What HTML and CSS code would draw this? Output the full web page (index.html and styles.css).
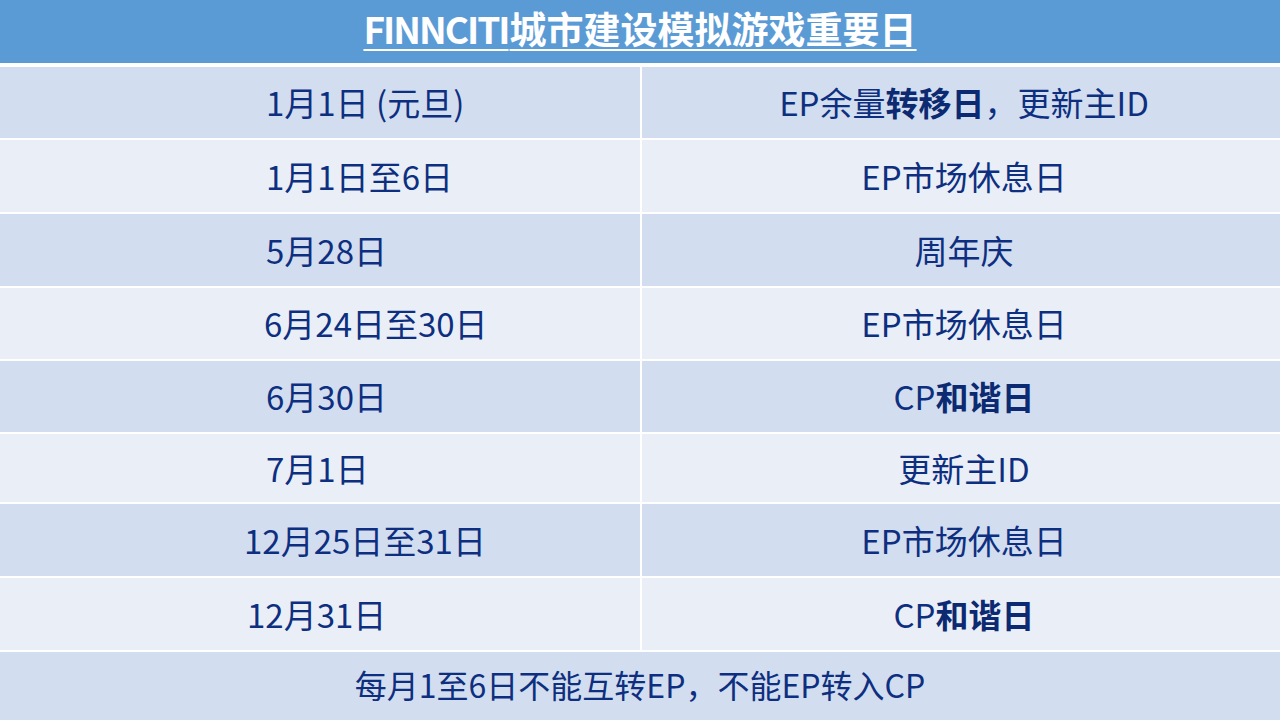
FILE: index.html
```html
<!DOCTYPE html>
<html lang="zh-CN">
<head>
<meta charset="utf-8">
<title>FINNCITI城市建设模拟游戏重要日</title>
<link rel="stylesheet" href="styles.css">
</head>
<body>
<header class="title-bar">
  <h1 class="title"><span class="latin">FINNCITI</span>城市建设模拟游戏重要日</h1>
</header>
<main class="table">
  <div class="cell odd left">1月1日 (元旦)</div>
  <div class="cell odd right">EP余量<b>转移日</b>，更新主ID</div>

  <div class="cell even left">1月1日至6日</div>
  <div class="cell even right">EP市场休息日</div>

  <div class="cell odd left">5月28日</div>
  <div class="cell odd right">周年庆</div>

  <div class="cell even left shift">6月24日至30日</div>
  <div class="cell even right">EP市场休息日</div>

  <div class="cell odd left">6月30日</div>
  <div class="cell odd right">CP<b>和谐日</b></div>

  <div class="cell even left">7月1日</div>
  <div class="cell even right">更新主ID</div>

  <div class="cell odd left wide">12月25日至31日</div>
  <div class="cell odd right">EP市场休息日</div>

  <div class="cell even left wide2">12月31日</div>
  <div class="cell even right">CP<b>和谐日</b></div>

  <div class="cell odd footer">每月1至6日不能互转EP，不能EP转入CP</div>
</main>
</body>
</html>
```

FILE: styles.css
```css
html, body {
  margin: 0;
  padding: 0;
}
body {
  width: 1280px;
  height: 720px;
  overflow: hidden;
  background: #ffffff;
  font-family: "Noto Sans CJK SC", "Noto Sans", sans-serif;
  color: #0e2f80;
}
.title-bar {
  height: 63px;
  background: #5b9bd5;
  margin-bottom: 4px;
  display: flex;
  justify-content: center;
  align-items: center;
}
.title {
  margin: 0;
  padding-bottom: 6px;
  font-size: 37px;
  line-height: 1;
  font-weight: 700;
  color: #ffffff;
  text-decoration: underline;
  text-decoration-thickness: 2px;
  text-underline-offset: 5px;
  letter-spacing: 0;
}
.title .latin {
  letter-spacing: -2px;
  margin-right: 1px;
}
.table {
  display: grid;
  grid-template-columns: 640px 1fr;
  grid-template-rows: 71px 72px 72px 71px 71px 68px 72px 72px 70px;
  gap: 2px;
}
.cell {
  display: flex;
  align-items: center;
  font-size: 33px;
  line-height: 1;
  white-space: nowrap;
}
.odd { background: #d2deef; }
.even { background: #eaeff7; }
.left {
  padding-left: 266px;
}
.left.shift { padding-left: 264px; }
.left.wide { padding-left: 244px; }
.left.wide2 { padding-left: 247px; }
.right {
  justify-content: center;
  padding-left: 6px;
}
.right b {
  font-weight: 700;
  color: #0b2a72;
}
.footer {
  grid-column: 1 / span 2;
  justify-content: center;
  padding-bottom: 6px;
  font-size: 32px;
}
```
